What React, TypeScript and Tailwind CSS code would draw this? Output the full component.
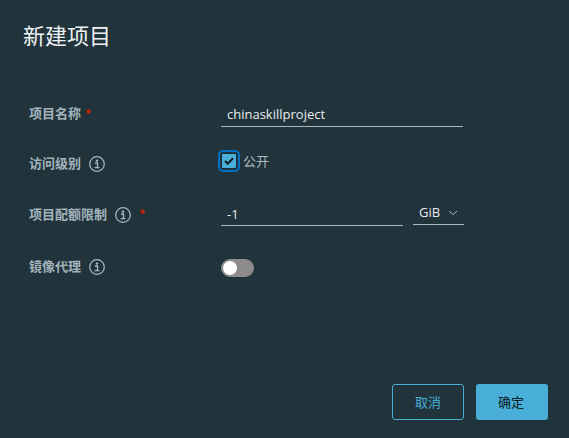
import React from "react";

const font = { fontFamily: '"Noto Sans CJK SC", sans-serif' };

function Info() {
  return (
    <svg width="16" height="16" viewBox="0 0 16 16" fill="none" className="shrink-0">
      <circle cx="8" cy="8" r="7.3" stroke="#acbac3" strokeWidth="1.2" />
      <circle cx="8" cy="4.6" r="1.2" fill="#acbac3" />
      <path d="M6 7h2.5v4.5M5.6 11.7h4.8" stroke="#acbac3" strokeWidth="1.3" />
    </svg>
  );
}

function Label({ text, info, req, shift }: { text: string; info?: boolean; req?: boolean; shift?: boolean }) {
  return (
    <div className={shift ? "w-[192px] mt-[4px] flex items-center text-[13px] font-bold text-[#a3b3bd]" : "w-[192px] flex items-center text-[13px] font-bold text-[#a3b3bd]"}>
      <span>{text}</span>
      {info && <span className="ml-[8px] mt-[2px]"><Info /></span>}
      {req && <span className={info ? "ml-[8px] text-[#c92100] text-[13px] leading-none" : "ml-[4px] text-[#c92100] text-[13px] leading-none"}>*</span>}
    </div>
  );
}

export default function App() {
  return (
    <div className="w-[569px] h-[438px] bg-[#21333b] flex flex-col overflow-hidden" style={font}>
      <div className="pl-[23px] pt-[18px] h-[99px] text-[22px] leading-[32px] font-normal text-[#eef1f3]">新建项目</div>
      <div className="pl-[29px] flex flex-col">
        <div className="flex items-center h-[28px]">
          <Label text="项目名称" req />
          <div className="w-[242px] h-[28px] border-b border-[#acbac3] pl-[6px] text-[13px] leading-[30px] text-[#e9ecef]" style={{ fontFamily: '"Open Sans", sans-serif' }}>chinaskillproject</div>
        </div>
        <div className="flex items-center h-[24px] mt-[24px]">
          <Label text="访问级别" info />
          <div className="flex items-center -ml-[3px] -mt-[4px]">
            <span className="w-[22px] h-[22px] rounded-[5px] border-[2px] border-[#0072c6] flex items-center justify-center">
              <span className="w-[16px] h-[16px] rounded-[2px] bg-[#49afd9] border border-[#17303c] flex items-center justify-center">
                <svg width="10" height="8" viewBox="0 0 10 8" fill="none">
                  <path d="M1 4l2.8 2.6L9 1.2" stroke="#0a1a20" strokeWidth="2" />
                </svg>
              </span>
            </span>
            <span className="ml-[3px] text-[13px] text-[#adbbc4]">公开</span>
          </div>
        </div>
        <div className="flex items-start h-[26px] mt-[25px]">
          <Label text="项目配额限制" info req shift />
          <div className="w-[182px] h-[26px] border-b border-[#acbac3] pl-[6px] text-[13px] leading-[28px] text-[#e9ecef]" style={{ fontFamily: '"Open Sans", sans-serif' }}>-1</div>
          <div className="ml-[10px] w-[51px] h-[25px] pt-[1px] border-b border-[#acbac3] pl-[6px] flex items-center text-[13px] text-[#e9ecef]" style={{ fontFamily: '"Open Sans", sans-serif' }}>
            GiB
            <svg width="10" height="6" viewBox="0 0 10 6" fill="none" className="ml-[8px]">
              <path d="M1 1l4 3.6L9 1" stroke="#acbac3" strokeWidth="1" />
            </svg>
          </div>
        </div>
        <div className="flex items-center h-[24px] mt-[28px]">
          <Label text="镜像代理" info />
          <div className="w-[33px] h-[18px] mt-[4px] rounded-full bg-[#8c8c8c] p-[2px]">
            <div className="w-[14px] h-[14px] rounded-full bg-white" />
          </div>
        </div>
      </div>
      <div className="mt-auto mb-[18px] mr-[21px] flex justify-end gap-[12px] text-[13px]">
        <button className="w-[72px] h-[36px] rounded-[3px] border border-[#49afd9] text-[#49afd9]">取消</button>
        <button className="w-[72px] h-[36px] rounded-[3px] bg-[#49afd9] text-[#0a1a20] pr-[2px]">确定</button>
      </div>
    </div>
  );
}
